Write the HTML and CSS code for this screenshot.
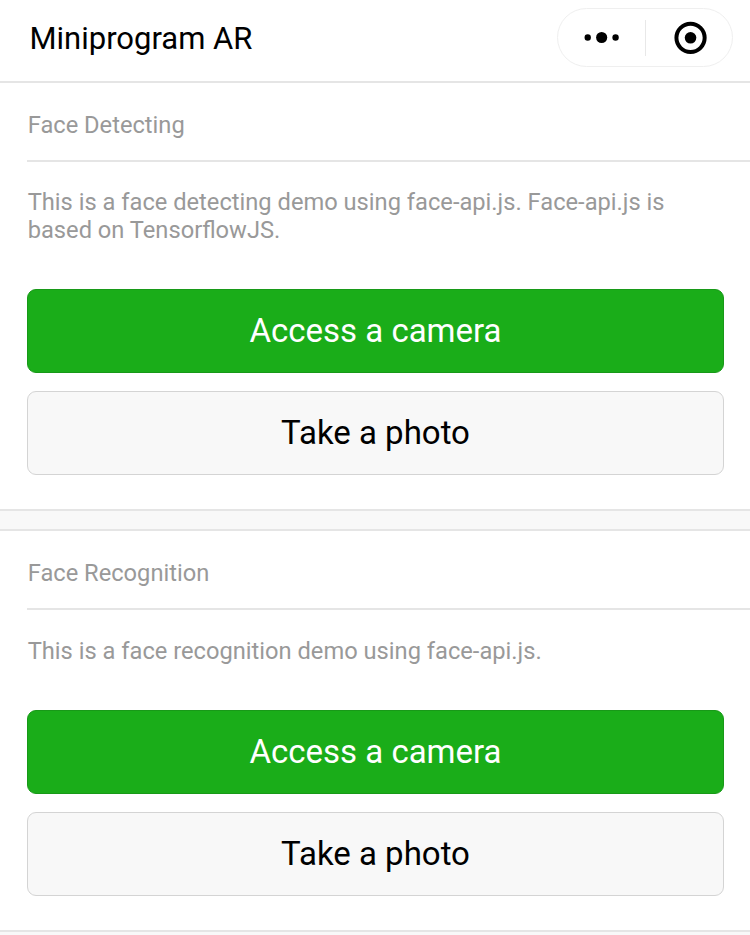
FILE: index.html
```html
<!DOCTYPE html>
<html lang="en">
<head>
<meta charset="utf-8">
<title>Miniprogram AR</title>
<link rel="stylesheet" href="styles.css">
</head>
<body>
<header class="navbar">
  <h1 class="navbar-title">Miniprogram AR</h1>
  <div class="capsule">
    <svg class="capsule-icon" viewBox="0 0 87 57"><circle cx="29.9" cy="28.5" r="3.2"/><circle cx="43.9" cy="28.5" r="5.6"/><circle cx="57.9" cy="28.5" r="3.2"/></svg>
    <span class="capsule-divider"></span>
    <svg class="capsule-icon" viewBox="0 0 87 57"><circle class="ring" cx="44.8" cy="28.8" r="14.2"/><circle cx="44.8" cy="28.8" r="5.8"/></svg>
  </div>
</header>
<main>
  <section class="panel">
    <h2 class="panel-title">Face Detecting</h2>
    <p class="panel-text">This is a face detecting demo using face-api.js. Face-api.js is<br>based on TensorflowJS.</p>
    <div class="actions">
      <button class="button primary">Access a camera</button>
      <button class="button">Take a photo</button>
    </div>
  </section>
  <section class="panel">
    <h2 class="panel-title">Face Recognition</h2>
    <p class="panel-text">This is a face recognition demo using face-api.js.</p>
    <div class="actions">
      <button class="button primary">Access a camera</button>
      <button class="button">Take a photo</button>
    </div>
  </section>
</main>
</body>
</html>
```
FILE: styles.css
```css
* { box-sizing: border-box; }
body {
  margin: 0;
  height: 935px;
  overflow: hidden;
  background: #f8f8f8;
  font-family: Roboto, sans-serif;
}
.navbar {
  display: flex;
  align-items: flex-start;
  justify-content: space-between;
  height: 81px;
  padding: 8px 17px 0 29.5px;
  background: #fff;
}
.navbar-title {
  margin: 0;
  font-size: 31px;
  font-weight: 400;
  line-height: 61px;
  color: #000;
}
.capsule {
  display: flex;
  align-items: center;
  width: 176px;
  height: 59px;
  border: 1px solid #efefef;
  border-radius: 30px;
}
.capsule-icon { height: 57px; flex: 1; min-width: 0; }
.capsule-divider { width: 1px; height: 36px; background: #e8e8e8; }
.ring { fill: none; stroke: #000; stroke-width: 4; }
.panel {
  margin-bottom: 18px;
  border-top: 2px solid #e5e5e5;
  border-bottom: 2px solid #e5e5e5;
  background: #fff;
}
.panel-title {
  height: 79px;
  margin: 0 0 0 27px;
  padding: 28px 0 0 0.7px;
  border-bottom: 2px solid #e5e5e5;
  font-size: 23.68px;
  font-weight: 400;
  line-height: 28px;
  color: #999;
}
.panel-text {
  margin: 26px 27px 45px;
  padding-left: 0.7px;
  font-size: 23.68px;
  line-height: 28px;
  color: #999;
}
.panel + .panel .panel-text { margin-top: 27px; }
.actions {
  display: flex;
  flex-direction: column;
  gap: 18px;
  padding: 0 26px 34px 27px;
}
.button {
  height: 84px;
  padding: 0 0 1px;
  border: 1px solid #d4d4d4;
  border-radius: 9px;
  background: #f8f8f8;
  font: 400 33px Roboto, sans-serif;
  color: #000;
}
.primary { border-color: #189918; background: #1aad19; color: #fff; }
```
